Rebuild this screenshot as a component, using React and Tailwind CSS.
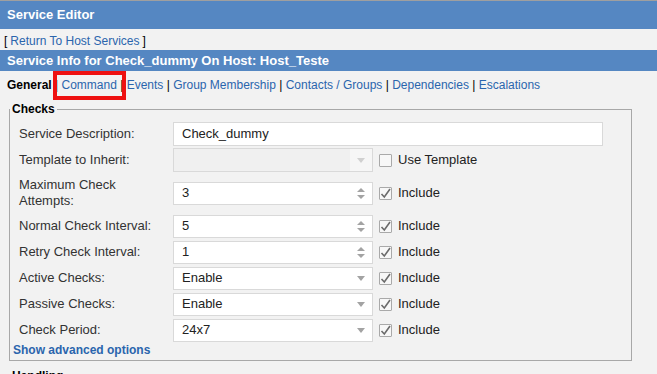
import React from 'react';

const tabs = ['Command', 'Events', 'Group Membership', 'Contacts / Groups', 'Dependencies', 'Escalations'];

const rows = [
  { label: 'Maximum Check Attempts:', value: '3', kind: 'number', tall: true },
  { label: 'Normal Check Interval:', value: '5', kind: 'number' },
  { label: 'Retry Check Interval:', value: '1', kind: 'number' },
  { label: 'Active Checks:', value: 'Enable', kind: 'select' },
  { label: 'Passive Checks:', value: 'Enable', kind: 'select' },
  { label: 'Check Period:', value: '24x7', kind: 'select' },
];

const ArrowDown = () => (
  <svg width="8" height="5" viewBox="0 0 8 5" className="ml-auto mr-[7px]">
    <path d="M0 0 L8 0 L4 5 Z" fill="#a3a3a3" />
  </svg>
);

const Spinner = () => (
  <svg width="8" height="11" viewBox="0 0 8 11" className="ml-auto mr-[7px]">
    <path d="M0 4 L8 4 L4 0 Z" fill="#a3a3a3" />
    <path d="M0 7 L8 7 L4 11 Z" fill="#a3a3a3" />
  </svg>
);

const CheckBox = ({ checked }) => (
  <div className="w-[13px] h-[13px] border border-[#a9a9a9] bg-[#f7f7f7] rounded-[1px] flex items-center justify-center">
    {checked && (
      <svg width="11" height="11" viewBox="0 0 11 11">
        <path d="M1.5 6 L4.3 9 L10 1" fill="none" stroke="#6b6b6b" strokeWidth="1.6" />
      </svg>
    )}
  </div>
);

const Row = ({ label, children, tall }) => (
  <div className={`flex items-center pl-[9px] ${tall ? 'h-[40px]' : 'h-[26px]'}`}>
    <div className="w-[150px] mr-[4px] text-[13px] leading-[16px] text-[#333]">{label}</div>
    {children}
  </div>
);

export default function App() {
  return (
    <div className="w-[657px] h-[374px] overflow-hidden bg-[#f2f2f2] font-['Liberation_Sans',Arial,sans-serif]">
      {/* Title bar */}
      <div className="h-[29px] border-t border-[#9f9f9f] bg-[#5587c2] flex items-center pl-[7px]">
        <span className="text-[13px] font-bold text-white">Service Editor</span>
      </div>

      <div className="h-[21px] flex items-center pl-[4px] pt-[2px] text-[12px] text-black">
        [ <a className="text-[#2a65ad] mx-[3px]">Return To Host Services</a> ]
      </div>

      <div className="h-[21px] bg-[#5587c2] flex items-center pl-[7px]">
        <span className="text-[13px] font-bold text-white">Service Info for Check_dummy On Host: Host_Teste</span>
      </div>

      {/* Tabs */}
      <div className="relative h-[28px] flex items-center pl-[7px] text-[12px] text-black whitespace-pre">
        <span className="font-bold">General</span>
        {tabs.map((t) => (
          <span key={t}>
            {' | '}
            <a className="text-[#2a65ad]">{t}</a>
          </span>
        ))}
        <div className="absolute left-[53px] top-0 w-[73px] h-[29px] border-[4px] border-[#ee1111]" />
      </div>

      {/* Checks */}
      <fieldset className="ml-[9px] mt-[2px] w-[623px] border border-[#a8a8a8] pt-[4px] pb-[3px]">
        <legend className="ml-0 px-[2px] text-[12px] leading-[16px] font-bold text-black">Checks</legend>

        <Row label="Service Description:">
          <div className="w-[430px] h-[24px] bg-white border border-[#d9d9d9] flex items-center pl-[8px] text-[13px] text-[#222]">
            Check_dummy
          </div>
        </Row>

        <Row label="Template to Inherit:">
          <div className="w-[200px] h-[24px] bg-[#f0f0f0] border border-[#d9d9d9] flex items-center">
            <div className="ml-auto h-full w-[22px] bg-[#f6f6f6] flex items-center justify-center">
              <svg width="8" height="5" viewBox="0 0 8 5">
                <path d="M0 0 L8 0 L4 5 Z" fill="#d0d0d0" />
              </svg>
            </div>
          </div>
          <div className="ml-[6px]">
            <CheckBox />
          </div>
          <span className="ml-[6px] text-[13px] text-[#222]">Use Template</span>
        </Row>

        {rows.map((r) => (
          <Row key={r.label} label={r.label} tall={r.tall}>
            <div className="w-[200px] h-[23px] bg-white border border-[#d9d9d9] flex items-center pl-[8px] text-[13px] text-[#222]">
              {r.value}
              {r.kind === 'number' ? <Spinner /> : <ArrowDown />}
            </div>
            <div className="ml-[6px]">
              <CheckBox checked />
            </div>
            <span className="ml-[6px] text-[13px] text-[#222]">Include</span>
          </Row>
        ))}

        <div className="pl-[3px] h-[14px] flex items-center">
          <a className="text-[12px] font-bold text-[#2a65ad]">Show advanced options</a>
        </div>
      </fieldset>

      {/* Next section, cut off by the window */}
      <fieldset className="ml-[9px] mt-[7px] w-[623px] border border-[#a8a8a8] h-[40px]">
        <legend className="ml-0 px-[2px] text-[12px] leading-[16px] font-bold text-black">Handling</legend>
      </fieldset>
    </div>
  );
}
